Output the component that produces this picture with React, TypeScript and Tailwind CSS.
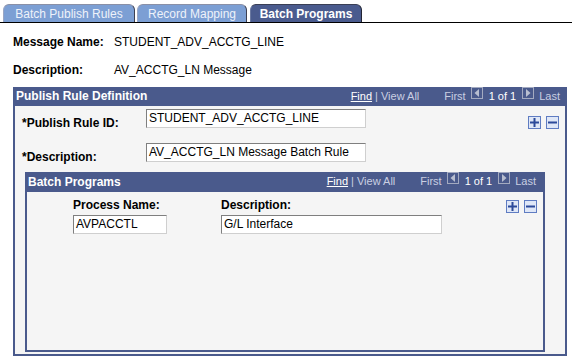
import React from "react";

function Arrow({ dir }: { dir: "left" | "right" }) {
  return (
    <span className="flex w-[12px] h-[12px] border border-[#a3aac0] items-center justify-center">
      <svg width="6" height="8" viewBox="0 0 6 8">
        {dir === "left" ? (
          <polygon points="5,0 5,8 0.5,4" fill="#b9bfd0" />
        ) : (
          <polygon points="1,0 1,8 5.5,4" fill="#b9bfd0" />
        )}
      </svg>
    </span>
  );
}

function Nav({ pr }: { pr: string }) {
  return (
    <div className={"ml-auto flex items-start text-[11px] leading-[13px] " + pr}>
      <span className="mt-[3px] text-white underline">Find</span>
      <span className="mt-[3px] ml-[3px] text-[#c9cfe2]">| View All</span>
      <span className="mt-[3px] ml-[25px] text-[#c9cfe2]">First</span>
      <span className="ml-[5px]">
        <Arrow dir="left" />
      </span>
      <span className="mt-[3px] ml-[6px] text-white">1 of 1</span>
      <span className="ml-[6px]">
        <Arrow dir="right" />
      </span>
      <span className="mt-[3px] ml-[5px] text-[#c9cfe2]">Last</span>
    </div>
  );
}

function PlusMinus({ className }: { className: string }) {
  return (
    <div className={"flex gap-[5px] " + className}>
      <span className="flex w-[13px] h-[13px] border border-[#5f7cc2] bg-[#dfe7f7] items-center justify-center">
        <svg width="9" height="9" viewBox="0 0 9 9">
          <rect x="3.5" y="0" width="2" height="9" fill="#2c4a9a" />
          <rect x="0" y="3.5" width="9" height="2" fill="#2c4a9a" />
        </svg>
      </span>
      <span className="flex w-[13px] h-[13px] border border-[#5f7cc2] bg-[#dfe7f7] items-center justify-center">
        <svg width="9" height="9" viewBox="0 0 9 9">
          <rect x="0" y="3.5" width="9" height="2" fill="#2c4a9a" />
        </svg>
      </span>
    </div>
  );
}

function Field({ w, text }: { w: string; text: string }) {
  return (
    <div
      className={
        "h-[19px] bg-white border border-t-[#7f7f7f] border-l-[#7f7f7f] border-b-[#cfcfcf] border-r-[#cfcfcf] pl-[2px] text-[12px] leading-[17px] text-black whitespace-nowrap overflow-hidden " +
        w
      }
    >
      {text}
    </div>
  );
}

export default function App() {
  return (
    <div className="w-[572px] h-[358px] bg-white overflow-hidden text-black font-['Liberation_Sans',Arial,sans-serif]">
      {/* Tabs */}
      <div className="h-[23px] border-b border-black flex items-end pl-[3px]">
        <div className="w-[132px] h-[18px] rounded-t-[6px] bg-[#7c9fd4] border-t border-l border-r border-t-[#8a90a6] border-l-[#9aa6c4] border-r-[#3d3f50] text-[#eef2fa] text-[12px] flex items-center justify-center">
          Batch Publish Rules
        </div>
        <div className="ml-[2px] w-[110px] h-[18px] rounded-t-[6px] bg-[#7c9fd4] border-t border-l border-r border-t-[#8a90a6] border-l-[#9aa6c4] border-r-[#3d3f50] text-[#eef2fa] text-[12px] flex items-center justify-center">
          Record Mapping
        </div>
        <div className="ml-[3px] w-[112px] h-[18px] rounded-t-[6px] bg-[#4a5b8e] border-t border-l border-r border-t-[#3a3f55] border-l-[#6a78a0] border-r-[#222433] text-white font-bold text-[12px] flex items-center justify-center">
          Batch Programs
        </div>
      </div>

      {/* Message info */}
      <div className="mt-[12px] flex text-[12px] leading-[14px]">
        <div className="pl-[13px] w-[114px] font-bold">Message Name:</div>
        <div>STUDENT_ADV_ACCTG_LINE</div>
      </div>
      <div className="mt-[14px] flex text-[12px] leading-[14px]">
        <div className="pl-[13px] w-[114px] font-bold">Description:</div>
        <div>AV_ACCTG_LN Message</div>
      </div>

      {/* Outer panel */}
      <div className="mt-[10px] ml-[13px] w-[554px] h-[269px] flex flex-col">
        <div className="h-[19px] bg-[#4a5a8c] flex items-start">
          <div className="mt-[2px] pl-[3px] text-[12px] leading-[14px] font-bold text-white">
            Publish Rule Definition
          </div>
          <Nav pr="pr-[7px]" />
        </div>
        <div className="flex-1 bg-[#f5f5f5] border-2 border-t-0 border-[#4a5a8c] flex flex-col">
          <div className="mt-[3px] flex items-start">
            <div className="pl-[7px] w-[131px] mt-[7px] text-[12px] leading-[14px] font-bold">
              *Publish Rule ID:
            </div>
            <Field w="w-[220px]" text="STUDENT_ADV_ACCTG_LINE" />
            <PlusMinus className="ml-auto mr-[6px] mt-[7px]" />
          </div>
          <div className="mt-[13px] flex items-start">
            <div className="pl-[7px] w-[131px] mt-[7px] text-[12px] leading-[14px] font-bold">
              *Description:
            </div>
            <Field w="w-[220px]" text="AV_ACCTG_LN Message Batch Rule" />
          </div>

          {/* Inner panel */}
          <div className="mt-[8px] ml-[10px] w-[520px] h-[180px] flex flex-col">
            <div className="h-[20px] bg-[#4a5a8c] flex items-start">
              <div className="mt-[3px] pl-[3px] text-[12px] leading-[14px] font-bold text-white">
                Batch Programs
              </div>
              <Nav pr="pr-[9px]" />
            </div>
            <div className="flex-1 bg-[#f5f5f5] border-2 border-t-0 border-[#4a5a8c] flex items-start">
              <div className="ml-[46px] mt-[6px] flex">
                <div className="w-[148px] flex flex-col">
                  <div className="text-[12px] leading-[14px] font-bold">Process Name:</div>
                  <div className="mt-[3px]">
                    <Field w="w-[94px]" text="AVPACCTL" />
                  </div>
                </div>
                <div className="flex flex-col">
                  <div className="text-[12px] leading-[14px] font-bold">Description:</div>
                  <div className="mt-[3px]">
                    <Field w="w-[221px]" text="G/L Interface" />
                  </div>
                </div>
              </div>
              <PlusMinus className="ml-auto mr-[6px] mt-[8px]" />
            </div>
          </div>
        </div>
      </div>
    </div>
  );
}
